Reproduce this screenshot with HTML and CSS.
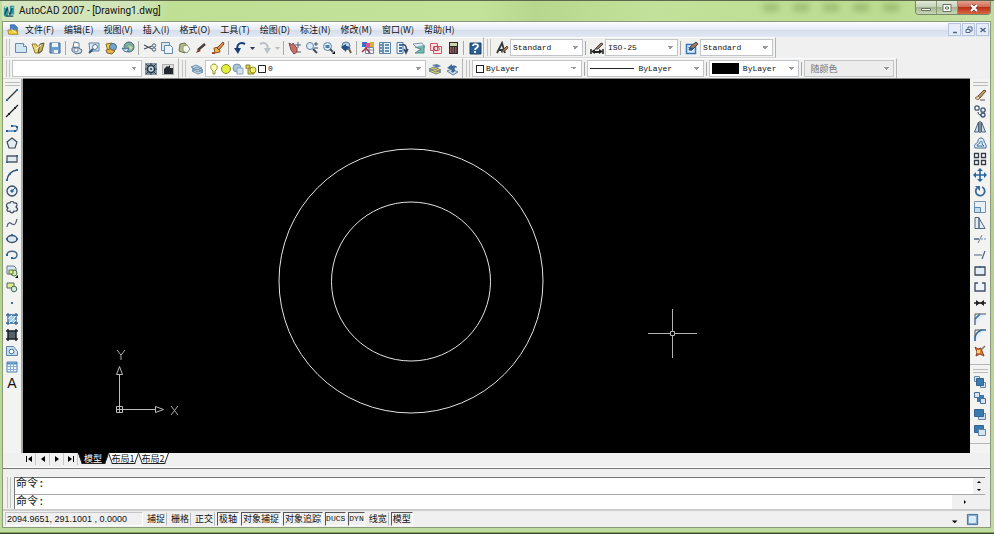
FILE: index.html
```html
<!DOCTYPE html>
<html lang="zh-CN">
<head>
<meta charset="utf-8">
<title>AutoCAD 2007 - [Drawing1.dwg]</title>
<link rel="stylesheet" href="styles.css">
</head>
<body>
<div class="window">
<header class="titlebar">
  <svg class="icon" viewBox="0 0 14 14"><path d="M1 2h5v11H1zM8 1h5v10H8z" fill="#329c9c"/><path d="M2 11 5 4l3 7 3-8M3 13h9" stroke="#164c62" stroke-width="1.5" fill="none"/><path d="M2 3h2M10 3h2M7 5v4" stroke="#d7f5ef"/></svg>
  <h1>AutoCAD 2007 - [Drawing1.dwg]</h1>
  <div class="glass"><i></i><i></i><i></i><i></i><i></i></div>
  <div class="winbtns">
    <button aria-label="最小化"><svg viewBox="0 0 14 10"><path d="M2.500 5.500h9v2h-9z" fill="#fff" stroke="#68745c"/></svg></button>
    <button aria-label="最大化"><svg viewBox="0 0 14 10"><path d="M3 1.500h8v7H3zM5.500 4h3v2h-3z" fill="#fff" stroke="#68745c"/></svg></button>
    <button class="close" aria-label="关闭"><svg viewBox="0 0 14 10"><path d="m4 2 6 6m0-6-6 6" stroke="#744" stroke-width="3.500"/><path d="m4 2 6 6m0-6-6 6" stroke="#fff" stroke-width="2"/></svg></button>
  </div>
</header>
<div class="client">
<nav class="menubar">
  <svg class="icon" viewBox="0 0 14 14"><path d="M4 1h5l3 3v6H4z" fill="#4a82c6" stroke="#3c67a4"/><path d="M1 7h10l2 5H2z" fill="#f4cf35" stroke="#9e8120"/><path d="m5 6 5 4" stroke="#fff"/></svg>
  <button>文件(F)</button><button>编辑(E)</button><button>视图(V)</button><button>插入(I)</button><button>格式(O)</button><button>工具(T)</button><button>绘图(D)</button><button>标注(N)</button><button>修改(M)</button><button>窗口(W)</button><button>帮助(H)</button>
  <div class="mdi">
    <button aria-label="最小化图形"><svg viewBox="0 0 10 10"><path d="M3 7.500h4" stroke="#4b668c" stroke-width="1.500"/></svg></button>
    <button aria-label="还原图形"><svg viewBox="0 0 10 10"><path d="M4 4V2h4v4H6M2 4.500h4v3H2z" fill="none" stroke="#4b668c"/></svg></button>
    <button aria-label="关闭图形"><svg viewBox="0 0 10 10"><path d="m2.500 3 5 4m0-4-5 4" stroke="#4b668c" stroke-width="1.500"/></svg></button>
  </div>
</nav>
<div class="toolrow">
  <div class="bar standard">
    <i class="grip"></i>
    <button aria-label="新建"><svg viewBox="0 0 14 14"><path d="M1.500 2.500h8l3 3v6h-11z" fill="#cfe7f5" stroke="#6a8bad"/><path d="M9.500 2.500v3h3" fill="#fff" stroke="#6a8bad"/></svg></button>
    <button aria-label="打开"><svg viewBox="0 0 14 14"><path d="M1 3h4l1 2h5l-2 7H4z" fill="#f0d36b" stroke="#8e7b36"/><path d="m7 12 2-9 4-1-2 8z" fill="#c6b34b" stroke="#5d583b"/><path d="m5 8 5-4" stroke="#fff"/></svg></button>
    <button aria-label="保存"><svg viewBox="0 0 14 14"><path d="M2 2h10v10H2z" fill="#6ba0d2" stroke="#3f6693"/><path d="M4 2h6v4H4zM4 9h6v3H4z" fill="#eaf3fa"/><path d="M5 9v3" stroke="#36587e"/></svg></button>
    <i class="sep"></i>
    <button aria-label="打印"><svg viewBox="0 0 14 14"><path d="m4 1 5 1v5L3 6z" fill="#fff" stroke="#657c99"/><path d="m2 7 5-1 5 3-1 3-5 1-4-3z" fill="#d2deeb" stroke="#526d8b"/><circle cx="6" cy="9" r="2" fill="#fff" stroke="#7884a5"/></svg></button>
    <button aria-label="打印预览"><svg viewBox="0 0 14 14"><path d="M2 2h10v8H7l-4 1z" fill="#d9e9f5" stroke="#6581a3"/><circle cx="8" cy="6" r="2.500" fill="#fff" stroke="#557398"/><path d="m6 8-4 4" stroke="#36587c" stroke-width="2"/></svg></button>
    <button aria-label="发布"><svg viewBox="0 0 14 14"><path d="m2 3 6-1 2 6-6 2z" fill="#f4cd48" stroke="#836d29"/><circle cx="9" cy="6" r="3.500" fill="#72a4cc" stroke="#476e8c"/><path d="m2 9 4-1 5 2-3 3-5-1z" fill="#e6b843" stroke="#86603a"/></svg></button>
    <button aria-label="三维 DWF"><svg viewBox="0 0 14 14"><circle cx="8" cy="6" r="5" fill="#77a99e" stroke="#446a80"/><path d="m5 3 3 2-1 3 3 1 2-3" fill="#c3d88b"/><path d="m1 7 3 1 4-1-2 4-3-1z" fill="#e3effa" stroke="#4b719e"/></svg></button>
    <i class="sep"></i>
    <button aria-label="剪切"><svg viewBox="0 0 14 14"><path d="m1 4 8 4M1 8l8-3" stroke="#48535f" stroke-width="1.300"/><circle cx="11" cy="4.500" r="1.700" fill="none" stroke="#455e7b"/><circle cx="11" cy="8.500" r="1.700" fill="none" stroke="#455e7b"/></svg></button>
    <button aria-label="复制"><svg viewBox="0 0 14 14"><path d="M1.500 1.500h8v8h-8z" fill="#d8e8f3" stroke="#6989a9"/><path d="M4.500 4.500h6l2 2v6h-8z" fill="#e9f5fb" stroke="#6989a9"/></svg></button>
    <button aria-label="粘贴"><svg viewBox="0 0 14 14"><path d="m3 3 5-1 3 4-3 6-6-2z" fill="#b8bd83" stroke="#6b7451"/><path d="m6 5 4-1 3 4-3 4-4-2z" fill="#f3f7f6" stroke="#8a967d"/></svg></button>
    <button aria-label="特性匹配"><svg viewBox="0 0 14 14"><path d="m4 9 7-6" stroke="#493f3b" stroke-width="2.500"/><path d="m2 12 2-4 3 2z" fill="#853d2c"/></svg></button>
    <button aria-label="块编辑器"><svg viewBox="0 0 14 14"><path d="m3 7 5-1 1 5-5 1z" fill="#edba35" stroke="#884f2a"/><path d="m6 7 6-6 1 2-5 6z" fill="#e7933c" stroke="#76432e"/><path d="M1 11h3v2H1z" fill="#b04b35"/></svg></button>
    <i class="sep"></i>
    <button aria-label="放弃"><svg viewBox="0 0 14 14"><path d="M12 3C6 0 3 5 5 9" fill="none" stroke="#173e75" stroke-width="2"/><path d="M1 7h7l-3 6z" fill="#173e75"/></svg></button>
    <button class="mini" aria-label="放弃列表"><svg viewBox="0 0 7 14"><path d="M1 6h5l-2.500 3z" fill="#335"/></svg></button>
    <button aria-label="重做"><svg viewBox="0 0 14 14"><path d="M2 3c6-3 9 2 7 6" fill="none" stroke="#bac1c8" stroke-width="2"/><path d="M6 7h7l-4 6z" fill="#bac1c8"/></svg></button>
    <button class="mini" aria-label="重做列表"><svg viewBox="0 0 7 14"><path d="M1 6h5l-2.500 3z" fill="#bbb"/></svg></button>
    <i class="sep"></i>
    <button aria-label="实时平移"><svg viewBox="0 0 14 14"><path d="M1 2c2 1 2 1 3 2l1-2 2 3 2 2v4l-3 2-3-4z" fill="#c66f66" stroke="#854b4b"/><path d="M7 4h6m-3-3v6M9 11h4" stroke="#4d5c75"/></svg></button>
    <button aria-label="实时缩放"><svg viewBox="0 0 14 14"><circle cx="5" cy="5" r="3.500" fill="#dceefa" stroke="#5d81a4"/><path d="m8 8 4 4" stroke="#414d62" stroke-width="2"/><path d="M9 3h4m-2-2v4M9 7h4" stroke="#38516f"/></svg></button>
    <button aria-label="窗口缩放"><svg viewBox="0 0 14 14"><circle cx="5.500" cy="5.500" r="4" fill="#dceefa" stroke="#5d81a4"/><path d="M3.500 4h4v3h-4z" fill="#527da9"/><path d="m8 8 3 3" stroke="#405068" stroke-width="2"/><path d="M13 10v3h-3z"/></svg></button>
    <button aria-label="缩放上一个"><svg viewBox="0 0 14 14"><circle cx="7" cy="5" r="4" fill="#b8d5e9" stroke="#597994"/><path d="m10 8 2 4" stroke="#6e6544" stroke-width="2"/><path d="m2 6 5-3v2c3 0 3 1 5 3-3-1-3 0-5 1v2z" fill="#254f87"/></svg></button>
    <i class="sep"></i>
    <button aria-label="特性"><svg viewBox="0 0 14 14"><path d="M1 1h5v5H1z" fill="#3474c2"/><path d="M5 2h4v4H5z" fill="#d851a3"/><path d="M9 1h4v5H9z" fill="#d9ad36"/><path d="M4.500 6.500h8v6h-8zM5 9h7M8 6v6" fill="#fff" stroke="#7384a6"/><path d="m1 11 4-4 4 5" fill="none" stroke="#a93550" stroke-width="1.500"/></svg></button>
    <button aria-label="设计中心"><svg viewBox="0 0 14 14"><path d="M1.500 1.500h11v11h-11z" fill="#e6f2fb" stroke="#5b83ad"/><path d="M5 2v10M7 4h4M7 7h4M7 10h4M2 4h2M2 7h2M2 10h2" stroke="#446f98" stroke-width="1.500"/></svg></button>
    <button aria-label="工具选项板"><svg viewBox="0 0 14 14"><path d="M2 1.500h6v11H2z" fill="#e8f2fb" stroke="#5a7ba1"/><path d="M4 4h3M4 7h3M4 10h3" stroke="#3577b1" stroke-width="2"/><path d="M7 4c4-1 5 2 4 7m-2-3 2 4 2-4" fill="none" stroke="#334663" stroke-width="1.500"/></svg></button>
    <button aria-label="图纸集"><svg viewBox="0 0 14 14"><path d="m1 3 9-1 3 4-8 1z" fill="#e3edf5" stroke="#8097ac"/><path d="m3 6 6 2-6 4h9V4" fill="#74b7ae" stroke="#558a90"/></svg></button>
    <button aria-label="标记集"><svg viewBox="0 0 14 14"><path d="M1.500 2.500h7v7h-7zM4.500 5.500h8v7h-8z" fill="#fae5e6" stroke="#cf5967"/><path d="M5 8c0-4 6-3 5 0 2 1-4 3-5 0" fill="none" stroke="#cc3042"/></svg></button>
    <button aria-label="计算器"><svg viewBox="0 0 14 14"><path d="M3 1h9v12H3z" fill="#35282b"/><path d="M4 2h7v3H4z" fill="#c5d6b1"/><path d="M4 7h7M4 9h7M4 11h7" stroke="#ed9180" stroke-dasharray="1.500 1"/></svg></button>
    <i class="sep"></i>
    <button aria-label="帮助"><svg viewBox="0 0 14 14"><path d="M2 2h11v11H2z" fill="#285f94" stroke="#234267"/><path d="M5 5c0-3 5-2 5 0 0 2-3 2-3 4m0 1v2" fill="none" stroke="#fff" stroke-width="1.800"/></svg></button>
  </div>
  <div class="bar styles">
    <i class="grip"></i>
    <button aria-label="文字样式"><svg viewBox="0 0 14 14"><path d="M2 12 7 2l3 10M4 9h5" fill="none" stroke="#32383b" stroke-width="1.800"/><path d="m6 11 6-6 1 2-5 4z" fill="#b77c49" stroke="#585048"/></svg></button>
    <select aria-label="文字样式列表"><option>Standard</option></select>
    <i class="sep"></i>
    <button aria-label="标注样式"><svg viewBox="0 0 14 14"><path d="M1 8v5m12-5v5" stroke="#222" stroke-width="1.500"/><path d="m1 10.500 4-2.500v2h4V8l4 2.500L9 13v-1H5v1z" fill="#222"/><path d="m5 8 6-6 2 1-5 5z" fill="#ad7652" stroke="#444"/></svg></button>
    <select aria-label="标注样式列表"><option>ISO-25</option></select>
    <i class="sep"></i>
    <button aria-label="表格样式"><svg viewBox="0 0 14 14"><path d="M1.500 3.500h9v9h-9z" fill="#d8edfc" stroke="#3c78b2" stroke-width="1.500"/><path d="m4 9 1-3 6-5 2 2-6 6z" fill="#af7857" stroke="#345"/><path d="m3 6 3 4 3-3" fill="#275c96"/></svg></button>
    <select aria-label="表格样式列表"><option>Standard</option></select>
  </div>
</div>
<div class="toolrow">
  <div class="bar workspace">
    <i class="grip"></i>
    <select class="grow" aria-label="工作空间"><option></option></select>
    <button aria-label="工作空间设置"><svg viewBox="0 0 14 14"><path d="M1 1h12v12H1z" fill="#8795a1"/><circle cx="7" cy="7" r="3.500" fill="#c4d6e4" stroke="#253544" stroke-width="1.500"/><path d="m2 2 2 2m8-2-2 2M2 12l2-2m8 2-2-2M7 1v2m0 8v2M1 7h2m8 0h2" stroke="#35465a"/><circle cx="7" cy="7" r="1" fill="#253544"/></svg></button>
    <button aria-label="我的工作空间"><svg viewBox="0 0 14 14"><path d="M1.500 2.500h11v10h-11z" fill="#ddd" stroke="#777" stroke-dasharray="1 1"/><path d="M3 7l3-3 1 1 2-2v3h3v6H3z" fill="#25292e"/></svg></button>
  </div>
  <div class="bar layers">
    <i class="grip"></i>
    <button aria-label="图层特性管理器"><svg viewBox="0 0 14 14"><path d="m2 9 5-2 6 3-5 2zM2 7l5-2 6 3-5 2zM1 5l5-2 6 3-5 2z" fill="#d1e1ed" stroke="#6d8fae"/></svg></button>
    <div class="combo grow">
      <svg class="layericons" viewBox="0 0 60 14"><path d="M7 9c-4-3-2-7 1-7s5 4 1 7v3H7z" fill="#fffdb0" stroke="#978e35"/><circle cx="20" cy="7" r="4.500" fill="#e4ee3b" stroke="#7e902b"/><circle cx="31" cy="6" r="4" fill="#a9c6d9" stroke="#7696ac"/><path d="M31 6h6v6h-6z" fill="#d5e2eb" stroke="#90a6b8"/><path d="M40 7V3h4v4M42 6h6v6h-6z" fill="#e1cf45" stroke="#8b8226"/><circle cx="47" cy="8" r="3" fill="#f2ee70" stroke="#938d25"/><path d="M52.500 3.500h7v7h-7z" fill="#fff" stroke="#222"/></svg>
      <select aria-label="图层"><option>0</option></select>
    </div>
    <button aria-label="将对象图层置为当前"><svg viewBox="0 0 14 14"><path d="m1 9 5-2 7 3-5 2zM1 7l5-2 7 3-5 2z" fill="#edda61" stroke="#718187"/><path d="m4 3 5-1 4 2-4 2z" fill="#5d7faa"/></svg></button>
    <button aria-label="上一个图层"><svg viewBox="0 0 14 14"><path d="m2 9 5-2 6 3-5 3z" fill="#ccdceb" stroke="#6382a0"/><path d="m2 6 5-4v2c3-1 5 0 5 2-2-1-3 0-2 2 0 2-2 3-4 2l1-2z" fill="#3b679a"/></svg></button>
  </div>
  <div class="bar props">
    <i class="grip"></i>
    <div class="combo color"><i class="swatch"></i><select aria-label="颜色"><option>ByLayer</option></select></div>
    <i class="sep"></i>
    <div class="combo ltype"><i class="line"></i><select aria-label="线型"><option>ByLayer</option></select></div>
    <i class="sep"></i>
    <div class="combo weight"><i class="block"></i><select aria-label="线宽"><option>ByLayer</option></select></div>
    <i class="sep"></i>
    <select class="plot" aria-label="打印样式" disabled><option>随颜色</option></select>
  </div>
</div>
<main>
  <div class="side left">
    <i class="hgrip"></i>
    <button aria-label="直线"><svg viewBox="0 0 14 14"><path d="m2 12 10-10" stroke="#333" stroke-width="1.300"/><path d="M1 11h2v2H1zM11 1h2v2h-2z" fill="#2b6dad"/></svg></button>
    <button aria-label="构造线"><svg viewBox="0 0 14 14"><path d="m1 13 12-12" stroke="#222" stroke-width="1.300"/><path d="M3 9h2v2H3zM9 3h2v2H9z" fill="#222"/></svg></button>
    <button aria-label="多段线"><svg viewBox="0 0 14 14"><path d="M2 11h9c2-1 2-5-1-5H7" fill="none" stroke="#4c81b2" stroke-width="1.500"/><path d="M1 10h2v2H1zM9 10h2v2H9zM6 5h2v2H6zM11 6h2v2h-2z" fill="#235c96"/></svg></button>
    <button aria-label="正多边形"><svg viewBox="0 0 14 14"><path d="m7 2 5 4-2 6H4L2 6z" fill="#e3edf5" stroke="#3d4a56" stroke-width="1.200"/></svg></button>
    <button aria-label="矩形"><svg viewBox="0 0 14 14"><path d="M2 4h10v6H2z" fill="#e0eaf3" stroke="#4e5a65" stroke-width="1.300"/><path d="M1 9h2v2H1zM11 3h2v2h-2z" fill="#286ba9"/></svg></button>
    <button aria-label="圆弧"><svg viewBox="0 0 14 14"><path d="M2 12c1-6 4-9 10-10" fill="none" stroke="#34495f" stroke-width="1.300"/><path d="M1 11h2v2H1zM4 5h2v2H4zM11 1h2v2h-2z" fill="#286ba9"/></svg></button>
    <button aria-label="圆"><svg viewBox="0 0 14 14"><circle cx="7" cy="7" r="5" fill="#e5f0f8" stroke="#3c4b5a" stroke-width="1.300"/><path d="m7 7 3-3M6 6h2v2H6z" fill="#2468a7" stroke="#2468a7"/></svg></button>
    <button aria-label="修订云线"><svg viewBox="0 0 14 14"><path d="M5 3c0-2 4-2 4 0 3-1 4 2 2 4 3 2 1 5-2 4-1 3-4 2-4 0-3 1-4-1-2-3-3-2-1-6 2-5z" fill="#eaf2f8" stroke="#3d4a56" stroke-width="1.200"/></svg></button>
    <button aria-label="样条曲线"><svg viewBox="0 0 14 14"><path d="M2 11c1-6 4-4 5-3 3 2 4-1 5-5" fill="none" stroke="#536171" stroke-width="1.200"/></svg></button>
    <button aria-label="椭圆"><svg viewBox="0 0 14 14"><ellipse cx="7" cy="7" rx="5" ry="3.500" fill="#dce9f4" stroke="#3b5065" stroke-width="1.400"/><path d="M6 2h2v2H6zM1 6h2v2H1zM11 6h2v2h-2z" fill="#2968a5"/></svg></button>
    <button aria-label="椭圆弧"><svg viewBox="0 0 14 14"><path d="M2 7c0-5 10-5 10 0 0 3-3 4-5 3" fill="none" stroke="#486b8c" stroke-width="1.500"/><path d="M1 6h2v2H1zM6 9h2v2H6z" fill="#2364a4"/></svg></button>
    <button aria-label="插入块"><svg viewBox="0 0 14 14"><path d="M2 2h7l2 2v6H2z" fill="#d9e7f3" stroke="#637b91"/><circle cx="9" cy="9" r="3" fill="#d7eabb" stroke="#457451"/><path d="M4 6h4v4H4z" fill="#e2e879" stroke="#577a3c"/><path d="M13 11v3h-3z"/></svg></button>
    <button aria-label="创建块"><svg viewBox="0 0 14 14"><path d="M2 3h7v5H2z" fill="#e3ec8c" stroke="#496c61"/><circle cx="9" cy="9" r="2.800" fill="#d6e8df" stroke="#3f6856"/></svg></button>
    <button aria-label="点"><svg viewBox="0 0 14 14"><path d="M6 6h2v2H6z" fill="#3b6e9f"/></svg></button>
    <button aria-label="图案填充"><svg viewBox="0 0 14 14"><path d="M3 3h8v8H3z" fill="#a6cfee"/><path d="M3 1v12M11 1v12M1 3h12M1 11h12" stroke="#356894" stroke-width="1.300"/><path d="m3 7 4-4M4 11l7-7M8 11l3-3" stroke="#e9f5fd"/></svg></button>
    <button aria-label="渐变色"><svg viewBox="0 0 14 14"><path d="M3 3h8v8H3z" fill="#52616c"/><path d="M3 1v12M11 1v12M1 3h12M1 11h12" stroke="#182127" stroke-width="1.500"/></svg></button>
    <button aria-label="面域"><svg viewBox="0 0 14 14"><path d="M1.500 2.500h7l4 5v4h-11z" fill="#c8dfef" stroke="#5d82a6"/><circle cx="6.500" cy="7.500" r="2.300" fill="#fff" stroke="#3f6c97"/></svg></button>
    <button aria-label="表格"><svg viewBox="0 0 14 14"><path d="M2 2h10v10H2z" fill="#eff7fd" stroke="#4f7fac"/><path d="M2 3.500h10" stroke="#4f8cc4" stroke-width="2"/><path d="M2 6.500h10M2 9.500h10M5.500 3v9M8.500 3v9" stroke="#88add0"/></svg></button>
    <button class="lettera" aria-label="多行文字">A</button>
  </div>
  <svg class="canvas" role="img" aria-label="图形窗口">
    <g fill="none" stroke="#e4e4e4"><circle cx="388" cy="202" r="132"/><circle cx="388" cy="202.500" r="79.500"/></g>
    <path d="M625 254.500h22m5 0h22M649.500 230v22m0 5v22M647.500 252.500h4v4h-4z" fill="none" stroke="#b4b4b4"/>
    <path d="M96.500 327v-32M100 330.500h32M93.500 327.500h6v6h-6zM93 330.500h7M96.500 327v7M93.500 295.500h6l-3-8zM132.500 327.500v6l8-3z" fill="none" stroke="#bcbcbc"/>
    <path d="m94 271 4 5 4-5M98 276v5M148 327l7 9M155 327l-7 9" fill="none" stroke="#aaa"/>
  </svg>
  <div class="side right">
    <i class="hgrip"></i>
    <button aria-label="删除"><svg viewBox="0 0 14 14"><path d="m5 8 6-6 2 1-6 7z" fill="#c69863" stroke="#5b5349"/><path d="m2 10 3-2 2 2-2 2z" fill="#e7c9a2" stroke="#8e7155"/><path d="M7 12h5" stroke="#555"/></svg></button>
    <button aria-label="复制对象"><svg viewBox="0 0 14 14"><circle cx="4" cy="4" r="2.200" fill="#fff" stroke="#435a73" stroke-width="1.300"/><circle cx="10" cy="6" r="2.200" fill="#deeaf5" stroke="#435a73" stroke-width="1.300"/><circle cx="10" cy="11" r="2" fill="#deeaf5" stroke="#435a73" stroke-width="1.300"/><path d="M5 8c0 2 1 3 3 3" fill="none" stroke="#234"/></svg></button>
    <button aria-label="镜像"><svg viewBox="0 0 14 14"><path d="M5.500 2v10h-4zM8.500 2v10h4z" fill="#cee1ef" stroke="#466585"/><path d="M7 1v12" stroke="#222"/></svg></button>
    <button aria-label="偏移"><svg viewBox="0 0 14 14"><path d="M2 12c-2-5 3-4 3-7 0-4 6-4 6 0 0 2 3 3 2 7z" fill="#e1eef8" stroke="#3e719f"/><path d="M4 10c0-3 3-1 3-4 1-2 3 0 2 2l2 2z" fill="none" stroke="#3e719f"/></svg></button>
    <button aria-label="阵列"><svg viewBox="0 0 14 14"><path d="M1.500 1.500h4v4h-4zM8.500 1.500h4v4h-4zM1.500 8.500h4v4h-4zM8.500 8.500h4v4h-4z" fill="#fff" stroke="#343d47" stroke-width="1.300"/></svg></button>
    <button aria-label="移动"><svg viewBox="0 0 14 14"><path d="M7 2v10M2 7h10" stroke="#28659d" stroke-width="1.600"/><path d="m7 0 3 3H4zM7 14l3-3H4zM0 7l3-3v6zM14 7l-3-3v6z" fill="#28659d"/></svg></button>
    <button aria-label="旋转"><svg viewBox="0 0 14 14"><path d="M4 4a4.500 4.500 0 1 0 5-1" fill="none" stroke="#376a99" stroke-width="1.800"/><path d="M2 2h5v5z" fill="#376a99"/></svg></button>
    <button aria-label="缩放"><svg viewBox="0 0 14 14"><path d="M1.500 1.500h11v11h-11z" fill="#e8f1f7" stroke="#7792ac"/><path d="M1.500 7.500h6v5h-6z" fill="#c4dded" stroke="#6285a7"/></svg></button>
    <button aria-label="拉伸"><svg viewBox="0 0 14 14"><path d="M2 1.500h4v11H2zM6 2l6 10.500H6z" fill="#e3eef6" stroke="#51677e"/></svg></button>
    <button aria-label="修剪"><svg viewBox="0 0 14 14"><path d="M1 7h5" stroke="#335373" stroke-width="1.300"/><path d="M8 7h6" stroke="#6995bd" stroke-dasharray="2 1"/><path d="m5 11 4-8" stroke="#6e7c88"/></svg></button>
    <button aria-label="延伸"><svg viewBox="0 0 14 14"><path d="M1 7h8m0 4 3-8" stroke="#486685" fill="none" stroke-width="1.200"/></svg></button>
    <button aria-label="打断于点"><svg viewBox="0 0 14 14"><path d="M2 3h10v8H2z" fill="#e3edf5" stroke="#3c4955" stroke-width="1.300"/><path d="M6 2h2v2H6z" fill="#2a6ea9"/></svg></button>
    <button aria-label="打断"><svg viewBox="0 0 14 14"><path d="M5 3H2v8h10V3H9" fill="#edf3f7" stroke="#435267" stroke-width="1.400"/></svg></button>
    <button aria-label="合并"><svg viewBox="0 0 14 14"><path d="M1 7h12" stroke="#222" stroke-width="1.500"/><path d="M3 4v6l4-3zM11 4v6L7 7z" fill="#222"/></svg></button>
    <button aria-label="倒角"><svg viewBox="0 0 14 14"><path d="M2 13V7l5-5h6" fill="#e2eef8" stroke="#42576b" stroke-width="1.200"/><path d="M2 7V2h5" fill="none" stroke="#555"/><path d="m2 7 5-5" stroke="#367fbb" stroke-width="1.500"/></svg></button>
    <button aria-label="圆角"><svg viewBox="0 0 14 14"><path d="M2 9V2h8" fill="none" stroke="#555"/><path d="M2 13V9c1-4 3-6 7-7h4" fill="#e2eef8" stroke="#36699a" stroke-width="1.700"/></svg></button>
    <button aria-label="分解"><svg viewBox="0 0 14 14"><path d="m2 3 3 2 3-1 1 3 2 5-4-2-4 2 1-4z" fill="#d68131" stroke="#8e3929"/><path d="m8 6 4-4" stroke="#77706e" stroke-width="1.500"/><path d="M4 6h3v3H4z" fill="#ffd658"/></svg></button>
    <i class="divider"></i><i class="hgrip"></i>
    <button aria-label="前置"><svg viewBox="0 0 14 14"><path d="M1.500 1.500h5v5h-5zM7.500 7.500h5v5h-5z" fill="#d5e5f2" stroke="#6887a4"/><path d="M3.500 3.500h7v7h-7z" fill="#397baf" stroke="#34648f"/></svg></button>
    <button aria-label="后置"><svg viewBox="0 0 14 14"><path d="M4 4h7v7H4z" fill="#397baf"/><path d="M1.500 1.500h5v5h-5zM7.500 7.500h5v5h-5z" fill="#d5e5f2" stroke="#496f94"/></svg></button>
    <button aria-label="置于对象之上"><svg viewBox="0 0 14 14"><path d="M5.500 6.500h7v6h-7z" fill="#ccdeeb" stroke="#6284a5"/><path d="M1.500 2.500h9v7h-9z" fill="#397baf" stroke="#34648f"/></svg></button>
    <button aria-label="置于对象之下"><svg viewBox="0 0 14 14"><path d="M1.500 2.500h9v7h-9z" fill="#397baf" stroke="#34648f"/><path d="M5.500 6.500h7v6h-7z" fill="#d5e6f3" stroke="#6284a5"/></svg></button>
    <i class="divider"></i>
  </div>
</main>
<div class="tabs">
  <button class="step" aria-label="第一个"><svg viewBox="0 0 8 8"><path d="M1 1h1v6H1zM7 1v6L3 4z"/></svg></button>
  <button class="step" aria-label="上一个"><svg viewBox="0 0 8 8"><path d="M6 1v6L2 4z"/></svg></button>
  <button class="step" aria-label="下一个"><svg viewBox="0 0 8 8"><path d="M2 1v6l4-3z"/></svg></button>
  <button class="step" aria-label="最后一个"><svg viewBox="0 0 8 8"><path d="M1 1v6l4-3zM6 1h1v6H6z"/></svg></button>
  <button class="tab active"><span>模型</span></button>
  <button class="tab"><span>布局1</span></button>
  <button class="tab"><span>布局2</span></button>
</div>
<section class="command">
  <i class="grip"></i>
  <div class="cmdbox">
    <div class="history"><span>命令:</span><div class="vscroll"><button aria-label="向上滚动"><svg viewBox="0 0 8 8"><path d="M2 5h4L4 3z"/></svg></button><button aria-label="向下滚动"><svg viewBox="0 0 8 8"><path d="M2 3h4L4 5z"/></svg></button></div></div>
    <div class="entry"><label for="cmd">命令:</label><input id="cmd" type="text"><button class="hscroll" aria-label="向右滚动"><svg viewBox="0 0 8 8"><path d="M3 2v4l2-2z"/></svg></button></div>
  </div>
</section>
<footer class="status">
  <output>2094.9651, 291.1001 , 0.0000</output>
  <button>捕捉</button><button>栅格</button><button>正交</button><button class="on">极轴</button><button class="on">对象捕捉</button><button class="on">对象追踪</button><button class="on mono">DUCS</button><button class="on mono">DYN</button><button>线宽</button><button class="on">模型</button>
  <div class="tray">
    <button aria-label="状态栏菜单"><svg viewBox="0 0 8 14"><path d="M1 8h6l-3 3z"/></svg></button>
    <button aria-label="全屏显示"><svg viewBox="0 0 14 14"><path d="M1.500 1.500h11v11h-11z" fill="#86aed1" stroke="#426b97"/><path d="M4 4h6v6H4z" fill="#d4eafa" stroke="#eff8ff"/></svg></button>
  </div>
</footer>
</div>
</div>
</body>
</html>
```
FILE: styles.css
```css
* { box-sizing: border-box; }

body {
  margin: 0;
  font: 9px/12px "Liberation Serif", "Noto Sans CJK SC", serif;
  color: #111;
}

button {
  margin: 0;
  padding: 0;
  border: 0;
  background: none;
  font: inherit;
  color: inherit;
  flex: none;
  display: flex;
  align-items: center;
  justify-content: center;
}

i { display: block; flex: none; }
svg { display: block; }

.window {
  height: 100vh;
  display: flex;
  flex-direction: column;
  padding: 0 3px 5px 2px;
  background: linear-gradient(#c0dc9c, #c3e19b 28%, #b2d088 40%, #bfdb9f);
  border-top: 1px solid #5e6a4c;
  border-bottom: 1px solid #3a4a30;
  box-shadow: inset 0 -1px #82a05f;
}

/* Title bar */
.titlebar {
  flex: none;
  height: 20px;
  display: flex;
  align-items: center;
  gap: 4px;
  padding-left: 1px;
  background: linear-gradient(100deg, #d5e5c0 0, #d1e5b7 14%, #bfdf95 17%, #c3e39b 48%, #b8d78e 54%, #c2e19a 66%, #bbdc91 90%, #c8e0aa);
}
.titlebar .icon { width: 12px; height: 14px; }
.titlebar h1 {
  margin: 0;
  font: 10px/14px Roboto, sans-serif;
}
.glass {
  display: flex;
  gap: 14px;
  margin-left: auto;
  margin-right: 12px;
  align-self: flex-start;
  padding-top: 3px;
}
.glass i {
  width: 16px;
  height: 7px;
  background: #64843f;
  opacity: 0.4;
  filter: blur(3px);
}
.winbtns {
  display: flex;
  align-self: flex-start;
  border: 1px solid #788768;
  border-top: 0;
  border-radius: 0 0 4px 4px;
  overflow: hidden;
}
.winbtns button {
  width: 21px;
  height: 13px;
  border-right: 1px solid #8b997b;
  background: linear-gradient(#e2e9d9, #c5d1b8 48%, #a5b494 50%, #c7d7b4);
}
.winbtns svg { width: 14px; height: 10px; }
.winbtns .close {
  width: 32px;
  border-right: 0;
  background: linear-gradient(#e4a08c, #cf6851 48%, #b93118 50%, #da6543);
}

.client {
  flex: 1;
  min-height: 0;
  display: flex;
  flex-direction: column;
  background: #f0f0f0;
  border: 1px solid #8b9b79;
}

/* Menus */
.menubar {
  flex: none;
  height: 15px;
  display: flex;
  align-items: center;
  gap: 10px;
  padding: 0 1px 0 4px;
  background: linear-gradient(#fcfdff, #e4eaf6 50%, #d5ddec 52%, #e2e8f4);
  font: 9px/13px "Noto Sans CJK SC", sans-serif;
}
.menubar .icon { width: 12px; height: 14px; margin-right: -4px; }
.mdi { display: flex; gap: 1px; margin-left: auto; }
.mdi button {
  width: 13px;
  height: 13px;
  border: 1px solid #b5c4dc;
  background: #e6edf8;
}
.mdi svg { width: 10px; height: 10px; }

/* Toolbars */
.toolrow { flex: none; height: 21px; display: flex; }
.bar {
  display: flex;
  align-items: center;
  padding: 0 2px;
  border-top: 1px solid #fbfbfb;
  border-right: 1px solid #b5b5b5;
  border-bottom: 1px solid #d7d7d7;
  background: #f1f1f0;
}
.bar button { width: 17px; height: 17px; }
.bar button.mini { width: 8px; }
.bar button svg { width: 14px; height: 14px; }
.bar .mini svg { width: 7px; }
.grip {
  width: 4px;
  height: 17px;
  margin: 0 2px 0 1px;
  border: solid #c4c4c4;
  border-width: 0 1px;
}
.sep {
  width: 1px;
  height: 14px;
  margin: 0 2px;
  background: #a9a9a9;
}
.standard { width: 481px; }
.styles { width: 292px; }
.workspace { width: 176px; }
.layers { width: 284px; }
.props { width: 434px; }
.styles select { flex: 1; min-width: 0; }
.grow { flex: 1; min-width: 0; }

select {
  appearance: none;
  height: 17px;
  margin: 0;
  padding: 0 12px 0 2px;
  border: 1px solid #c2c5c9;
  border-radius: 0;
  background: #fff conic-gradient(from 315deg at 50% 100%, #999 90deg, transparent 0) no-repeat right 4px center / 6px 3px;
  font: 8px/14px "Liberation Mono", monospace;
  color: #111;
}
.combo {
  display: flex;
  align-items: center;
  height: 17px;
  border: 1px solid #c2c5c9;
  background-color: #fff;
}
.combo select { flex: 1; min-width: 0; height: 15px; border: 0; }
.layericons { flex: none; width: 60px; height: 14px; }
.color { width: 111px; }
.ltype { width: 117px; }
.weight { width: 91px; }
.plot {
  width: 90px;
  padding-left: 5px;
  background-color: #ededed;
  font: 9px/14px "Noto Sans CJK SC", sans-serif;
  color: #777;
  opacity: 1;
}
.swatch { width: 8px; height: 8px; margin-left: 3px; border: 1px solid #222; }
.line { width: 44px; height: 1px; margin: 0 2px; background: #222; }
.block { width: 27px; height: 11px; margin: 0 2px; background: #000; }

/* Drawing area */
main { flex: 1; min-height: 0; display: flex; }
.side {
  flex: none;
  width: 20px;
  display: flex;
  flex-direction: column;
  align-items: center;
  padding-top: 3px;
  background: #f3f3f2;
}
.side.left { border-right: 2px solid #a9a9a9; }
.side button { width: 16px; height: 16px; }
.side svg { width: 14px; height: 14px; }
.side .lettera { font: 14px/16px "Liberation Sans", sans-serif; }
.hgrip {
  width: 15px;
  height: 4px;
  margin-bottom: 1px;
  border: solid #bbb;
  border-width: 1px 0;
}
.divider { width: 100%; height: 1px; margin: 5px 0 4px; background: #b5b5b5; }
.canvas {
  flex: 1;
  min-width: 0;
  height: 100%;
  background: #000;
  box-shadow: 0 -1px #888;
}

/* Layout tabs */
.tabs {
  flex: none;
  height: 15px;
  display: flex;
  align-items: flex-start;
  padding-left: 19px;
  border-bottom: 1px solid #fff;
}
.step { width: 14px; height: 12px; border-right: 1px solid #c8c8c8; }
.step svg { width: 8px; height: 8px; }
.tab {
  position: relative;
  width: 30px;
  height: 11px;
  font: 9px/11px "Noto Sans CJK SC", sans-serif;
}
.tab::before, .tab::after {
  content: "";
  position: absolute;
  top: 0;
  bottom: 0;
  border-bottom: 1px solid #222;
  background: #fff;
}
.tab::before {
  left: 2px;
  right: 40%;
  border-left: 1px solid #222;
  transform: skewX(20deg);
}
.tab::after {
  left: 40%;
  right: 1px;
  border-right: 1px solid #222;
  transform: skewX(-20deg);
}
.tab span { position: relative; z-index: 1; }
.tab.active { color: #fff; }
.tab.active::before, .tab.active::after { background: #000; }

/* Command line */
.command {
  flex: none;
  display: flex;
  padding: 8px 5px 0 4px;
  border-top: 1px solid #777;
  border-bottom: 2px solid #cdcdcd;
}
.command .grip { height: 31px; margin: 0 3px 0 0; }
.cmdbox {
  flex: 1;
  min-width: 0;
  border: solid #777;
  border-width: 1px 0 0 1px;
  background: #fff;
  font: 11px/14px "Liberation Mono", "Noto Sans CJK SC", monospace;
}
.history, .entry { display: flex; align-items: center; padding-left: 1px; }
.history { height: 17px; padding-bottom: 5px; border-bottom: 1px solid #aaa; }
.entry { height: 14px; }
.vscroll { align-self: flex-start; margin-left: auto; background: #f0f0f0; }
.vscroll button { width: 12px; height: 8px; }
.command svg { width: 8px; height: 8px; }
.entry input {
  flex: 1;
  min-width: 0;
  height: 14px;
  padding: 0 3px;
  border: 0;
  outline: 0;
  font: inherit;
}
.hscroll { width: 33px; height: 14px; padding-right: 7px; background: #f0f0f0; }

/* Status bar */
.status {
  flex: none;
  height: 16px;
  display: flex;
  align-items: center;
  gap: 2px;
  padding: 0 11px 0 2px;
  font: 9px/12px "Liberation Sans", "Noto Sans CJK SC", sans-serif;
}
.status output {
  width: 138px;
  height: 14px;
  padding: 0 1px;
  border: 1px solid #c6c6c6;
  border-color: #c6c6c6 #fff #fff #c6c6c6;
  white-space: nowrap;
}
.status button {
  height: 14px;
  padding: 0 1px;
  border: 1px solid #eee;
  border-right-color: #bbb;
}
.status .on { border-color: #555 #fff #fff #555; }
.status .mono { padding: 0; font: 8px/12px "Liberation Mono", monospace; }
.tray { display: flex; gap: 8px; margin-left: auto; }
.status .tray button { padding: 0; border: 0; }
.tray svg { height: 13px; }
```
